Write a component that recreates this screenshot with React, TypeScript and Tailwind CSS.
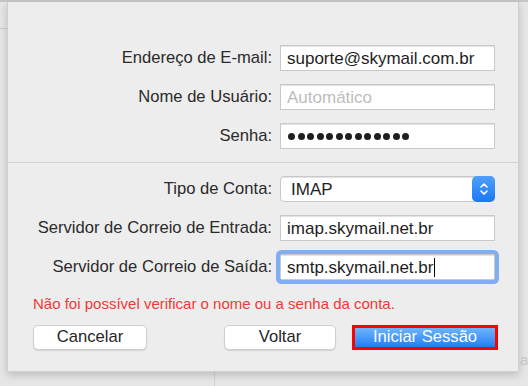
const font = { fontFamily: '"Liberation Sans", Arial, sans-serif' }

const rowLabel = 'flex-1 text-right text-[16.6px] text-[#2a2a2a] leading-none'
const fieldCls =
  'w-[215px] h-[26px] bg-white border border-[#c9c9c9] shadow-[inset_0_1px_0_#e2e2e2] flex items-center pl-[6px] text-[17px] text-[#1e1e1e] leading-none'
const btnCls =
  'h-[25px] bg-white rounded-[5px] border border-[#cfcfcf] shadow-[0_1px_1px_rgba(0,0,0,0.12)] text-[16.6px] text-[#262626] leading-none'

function Row({ label, children }: { label: string; children: React.ReactNode }) {
  return (
    <div className="flex items-center h-[26px]">
      <div className={rowLabel}>{label}</div>
      <div className="ml-[8px]">{children}</div>
    </div>
  )
}

function Stepper() {
  return (
    <div className="absolute right-[-1px] top-[-1px] bottom-[-1px] w-[23px] rounded-[5px] bg-gradient-to-b from-[#4da0fb] to-[#1a78f2] flex items-center justify-center">
      <svg width="10" height="16" viewBox="0 0 10 16" fill="none" stroke="white" strokeWidth="1.6" strokeLinecap="round" strokeLinejoin="round">
        <path d="M2 6 L5 3 L8 6" />
        <path d="M2 10 L5 13 L8 10" />
      </svg>
    </div>
  )
}

export default function App() {
  return (
    <div className="relative w-[528px] h-[386px] overflow-hidden bg-[#e6e6e6]" style={font}>
      {/* app window behind the sheet */}
      <div className="absolute left-0 top-0 w-full h-[2px] bg-[#c6c6c6]" />
      <div className="absolute left-0 top-[28px] w-[7px] h-px bg-[#cfcfcf]" />
      <div className="absolute left-[214px] top-[372px] w-px h-[14px] bg-[#d2d2d2]" />
      <div className="absolute left-[520px] top-[352px] text-[15px] text-[#c9c9c9] leading-none">a</div>

      {/* sheet */}
      <div className="absolute left-[7px] top-[2px] w-[512px] h-[370px] bg-[#ededed] border-x border-b border-[#d0d0d0] shadow-[0_3px_8px_rgba(0,0,0,0.18)] flex flex-col pt-[43px] pl-[25px] pr-[20px]">
        <div className="flex flex-col gap-[13px] pr-[3px]">
          <Row label="Endereço de E-mail:">
            <div className={fieldCls}>suporte@skymail.com.br</div>
          </Row>
          <Row label="Nome de Usuário:">
            <div className={`${fieldCls} text-[#bdbdbd]`}>Automático</div>
          </Row>
          <Row label="Senha:">
            <div className={`${fieldCls} gap-[2.5px] pl-[7px]`}>
              {Array.from({ length: 13 }).map((_, i) => (
                <span key={i} className="w-[7px] h-[7px] rounded-full bg-[#1e1e1e]" />
              ))}
            </div>
          </Row>
        </div>

        <div className="-ml-[25px] -mr-[20px] mt-[13px] h-px bg-[#d3d3d3]" />

        <div className="flex flex-col gap-[13px] pr-[3px] mt-[13px]">
          <Row label="Tipo de Conta:">
            <div className={`${fieldCls} relative rounded-[4px] pl-[10px] text-[16px]`}>
              IMAP
              <Stepper />
            </div>
          </Row>
          <Row label="Servidor de Correio de Entrada:">
            <div className={fieldCls}>imap.skymail.net.br</div>
          </Row>
          <Row label="Servidor de Correio de Saída:">
            <div className={`${fieldCls} ring-[4px] ring-[#80aef0] rounded-[2px] border-[#9dbdee]`}>
              smtp.skymail.net.br
              <span className="w-px h-[19px] bg-black ml-[1px]" />
            </div>
          </Row>
        </div>

        <div className="mt-[16px] text-[15px] text-[#f03a35] leading-none">
          Não foi possível verificar o nome ou a senha da conta.
        </div>

        <div className="flex items-center mt-[14px]">
          <button className={`${btnCls} w-[114px]`}>Cancelar</button>
          <button className={`${btnCls} ml-auto w-[112px]`}>Voltar</button>
          <button className="ml-[16px] w-[146px] h-[25px] border-[3px] border-[#ff0000] bg-gradient-to-b from-[#6db4fb] to-[#1c7ff6] text-[16.6px] text-white leading-none">
            Iniciar Sessão
          </button>
        </div>
      </div>
    </div>
  )
}
